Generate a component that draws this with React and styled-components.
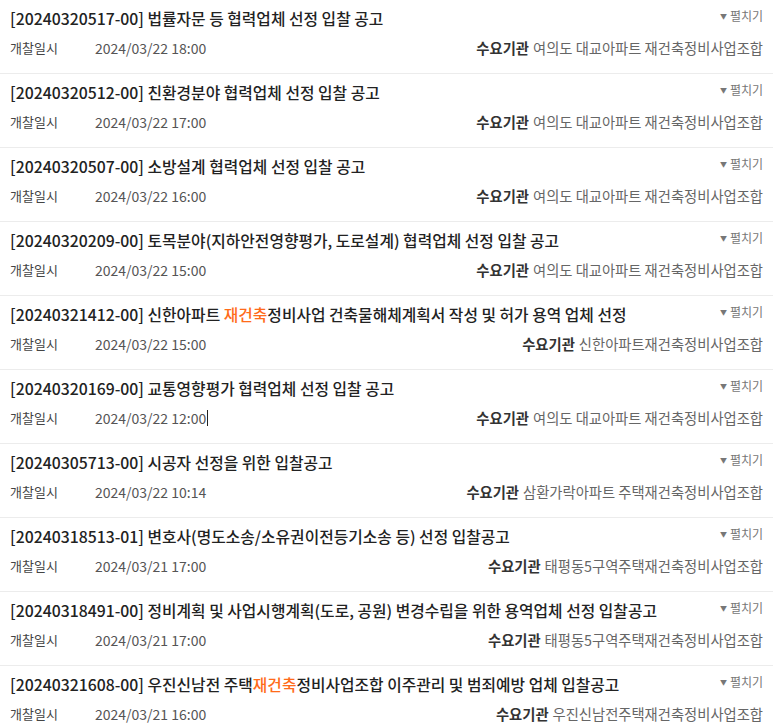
import React from "react";
import styled, { createGlobalStyle } from "styled-components";

const GlobalStyle = createGlobalStyle`
  body {
    margin: 0;
    background: #fff;
    font-family: "Noto Sans CJK KR", "Noto Sans", sans-serif;
  }
`;

const items = [
  { no: "20240320517-00", title: "법률자문 등 협력업체 선정 입찰 공고", date: "2024/03/22 18:00", org: "여의도 대교아파트 재건축정비사업조합" },
  { no: "20240320512-00", title: "친환경분야 협력업체 선정 입찰 공고", date: "2024/03/22 17:00", org: "여의도 대교아파트 재건축정비사업조합" },
  { no: "20240320507-00", title: "소방설계 협력업체 선정 입찰 공고", date: "2024/03/22 16:00", org: "여의도 대교아파트 재건축정비사업조합" },
  { no: "20240320209-00", title: "토목분야(지하안전영향평가, 도로설계) 협력업체 선정 입찰 공고", date: "2024/03/22 15:00", org: "여의도 대교아파트 재건축정비사업조합" },
  { no: "20240321412-00", title: ["신한아파트 ", "재건축", "정비사업 건축물해체계획서 작성 및 허가 용역 업체 선정"], date: "2024/03/22 15:00", org: "신한아파트재건축정비사업조합" },
  { no: "20240320169-00", title: "교통영향평가 협력업체 선정 입찰 공고", date: "2024/03/22 12:00", org: "여의도 대교아파트 재건축정비사업조합", caret: true },
  { no: "20240305713-00", title: "시공자 선정을 위한 입찰공고", date: "2024/03/22 10:14", org: "삼환가락아파트 주택재건축정비사업조합" },
  { no: "20240318513-01", title: "변호사(명도소송/소유권이전등기소송 등) 선정 입찰공고", date: "2024/03/21 17:00", org: "태평동5구역주택재건축정비사업조합" },
  { no: "20240318491-00", title: "정비계획 및 사업시행계획(도로, 공원) 변경수립을 위한 용역업체 선정 입찰공고", date: "2024/03/21 17:00", org: "태평동5구역주택재건축정비사업조합" },
  { no: "20240321608-00", title: ["우진신남전 주택", "재건축", "정비사업조합 이주관리 및 범죄예방 업체 입찰공고"], date: "2024/03/21 16:00", org: "우진신남전주택재건축정비사업조합" },
];

const List = styled.ul`
  list-style: none;
  margin: 0;
  padding: 0;
`;

const Row = styled.li`
  padding: 9px 10px 16px;
  border-bottom: 1px solid #ececec;
`;

const TopLine = styled.div`
  display: flex;
  align-items: flex-start;
  justify-content: space-between;
  height: 20px;
`;

const Title = styled.div`
  font-size: 15.8px;
  line-height: 20px;
  font-weight: 500;
  color: #222;
  white-space: nowrap;
`;

const Highlight = styled.span`
  color: #ff6b1a;
`;

const Toggle = styled.button`
  border: 0;
  background: none;
  padding: 0;
  font-family: inherit;
  font-size: 12px;
  line-height: 14px;
  color: #777;
  display: flex;
  align-items: center;
  gap: 3px;
  cursor: pointer;
`;

const Tri = styled.span`
  font-size: 7px;
  color: #777;
`;

const BottomLine = styled.div`
  display: flex;
  align-items: center;
  justify-content: space-between;
  margin-top: 10px;
  height: 18px;
  font-size: 14px;
  line-height: 18px;
`;

const When = styled.div`
  display: flex;
  align-items: center;
`;

const Label = styled.span`
  color: #444;
  font-size: 13px;
  width: 85px;
`;

const DateText = styled.span`
  color: #555;
`;

const Caret = styled.span`
  width: 1px;
  height: 16px;
  background: #222;
  margin-left: 1px;
`;

const Org = styled.div`
  color: #666;
  font-size: 14.3px;
  white-space: nowrap;
`;

const OrgLabel = styled.b`
  color: #333;
  font-weight: 700;
  margin-right: 4px;
`;

function renderTitle(t) {
  if (Array.isArray(t)) {
    return (
      <>
        {t[0]}
        <Highlight>{t[1]}</Highlight>
        {t[2]}
      </>
    );
  }
  return t;
}

export default function App() {
  return (
    <>
      <GlobalStyle />
      <List>
        {items.map((it) => (
          <Row key={it.no}>
            <TopLine>
              <Title>
                [{it.no}] {renderTitle(it.title)}
              </Title>
              <Toggle>
                <Tri>▼</Tri>펼치기
              </Toggle>
            </TopLine>
            <BottomLine>
              <When>
                <Label>개찰일시</Label>
                <DateText>{it.date}</DateText>
                {it.caret && <Caret />}
              </When>
              <Org>
                <OrgLabel>수요기관</OrgLabel>
                {it.org}
              </Org>
            </BottomLine>
          </Row>
        ))}
      </List>
    </>
  );
}
